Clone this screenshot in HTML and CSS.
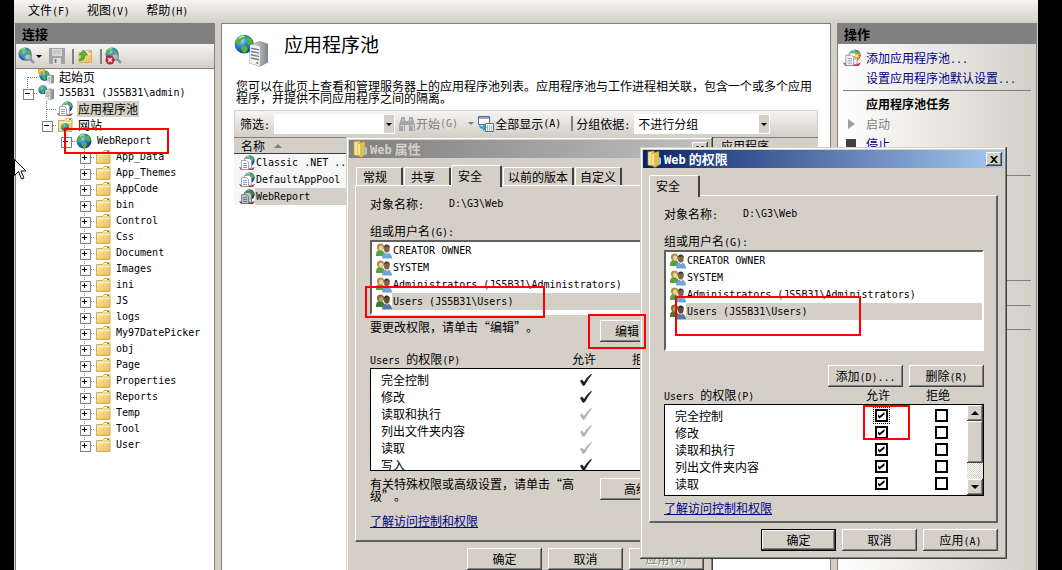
FILE: index.html
```
<!DOCTYPE html>
<html lang="zh-CN">
<head>
    <meta charset="UTF-8">
    <meta name="viewport" content="width=device-width, initial-scale=1.0">
    <title>应用程序池</title>
    <link rel="stylesheet" href="styles.css">
</head>
<body>
    <!-- icon set -->
    <svg class="sprite" aria-hidden="true">
        <defs>
            <radialGradient id="gGlobe" cx="0.35" cy="0.3" r="0.8">
                <stop offset="0" stop-color="#a8e0ff"/>
                <stop offset="0.4" stop-color="#2f86dc"/>
                <stop offset="1" stop-color="#0b2f80"/>
            </radialGradient>
            <linearGradient id="gFolder" x1="0" y1="0" x2="1" y2="1">
                <stop offset="0" stop-color="#fdeeb0"/>
                <stop offset="1" stop-color="#e5b95c"/>
            </linearGradient>
            <linearGradient id="gTower" x1="0" y1="0" x2="1" y2="0">
                <stop offset="0" stop-color="#e8ebec"/>
                <stop offset="1" stop-color="#7d8488"/>
            </linearGradient>
        </defs>
        <symbol id="globe" viewBox="0 0 16 16">
            <circle cx="8" cy="8" r="7.5" fill="url(#gGlobe)"/>
            <path d="M3 3q3-3 6-1.500l-1 2-2 1-1 3-2.500 1-1.500-2zM10 3l3 0 2 4-2 2-2-1-1.500-2.500zM6 9l4 1 1 2-2 3-2-.5-1.500-3z" fill="#55b52d"/>
            <path d="M4 3.500q2-2 4-1.500" stroke="#d4f5c0" fill="none"/>
        </symbol>
        <symbol id="tower" viewBox="0 0 13 16">
            <path d="M2 3l6-2 5 1.500v11l-5 2.500-6-2z" fill="url(#gTower)" stroke="#80878a" stroke-width="0.500"/>
            <path d="M2 3l6 1v12l-6-2z" fill="#f1f3f3"/>
            <path d="M2.500 5l5 1M2.500 7l5 1M2.500 9l5 1M2.500 11l5 1" stroke="#7a8286" stroke-width="0.900"/>
            <circle cx="6.500" cy="14" r="0.700" fill="#3bb54a"/>
        </symbol>
        <symbol id="server" viewBox="0 0 16 16">
            <use href="#globe" x="0" y="0" width="9.500" height="9.500"/>
            <use href="#tower" x="6" y="2" width="10" height="14"/>
        </symbol>
        <symbol id="home" viewBox="0 0 16 16">
            <use href="#globe" x="1" y="1" width="11" height="11"/>
            <use href="#tower" x="8" y="4" width="8" height="12"/>
            <path d="M0 0h7v4l-3-1-1 3-3-2z" fill="#f7a823"/>
            <path d="M1 2l4-1" stroke="#fff3b0"/>
        </symbol>
        <symbol id="pool" viewBox="0 0 16 16">
            <use href="#globe" x="5" y="0" width="11" height="11"/>
            <path d="M0 12l2 3h12l2-3-3 1h-9z" fill="#c83a2c"/>
            <path d="M5.500 3.500h5l2 2v8h-7z" fill="#fff" stroke="#8794a6" stroke-width="0.800"/>
            <path d="M2.500 5.500h5l2 2v7h-7z" fill="#fff" stroke="#8794a6" stroke-width="0.800"/>
            <path d="M4 8.500h4M4 10.500h4M4 12.500h4" stroke="#7d92b8" stroke-width="0.900"/>
        </symbol>
        <symbol id="addpool" viewBox="0 0 16 16">
            <use href="#pool" width="16" height="16"/>
            <path d="M12 2l1 2.500 2.500-1-1 2.500 1.500 1-2 .5.500 2.500-2.500-1.500-2 1.500.5-2.500-2-1 2.500-.5-.5-2.500 1.500 1z" fill="#f79a1c"/>
            <circle cx="12" cy="6.200" r="1.300" fill="#fff2a0"/>
        </symbol>
        <symbol id="folder" viewBox="0 0 16 16">
            <path d="M1.500 3.500h6l1.500-2h6v13h-13.500z" fill="url(#gFolder)" stroke="#d6ab5a"/>
            <path d="M9.500 2.500h5" stroke="#fff" stroke-width="1.200"/>
            <path d="M12 2.500h2" stroke="#3b7fc4" stroke-width="1"/>
            <path d="M2 5.500h12.500" stroke="#fff4c8"/>
        </symbol>
        <symbol id="sites" viewBox="0 0 16 16">
            <use href="#folder" width="16" height="16"/>
            <use href="#globe" x="4" y="6" width="8" height="8"/>
        </symbol>
        <symbol id="bookfolder" viewBox="0 0 16 18">
            <path d="M2 2l6-1v15l-6-1z" fill="#f8e58a" stroke="#c9a53b" stroke-width="0.600"/>
            <path d="M6 3l7-1.500v13.500l-4 2.500-3-2z" fill="#e3bf4c" stroke="#b08f2f" stroke-width="0.600"/>
            <path d="M7 4v11" stroke="#fff6b8" stroke-width="1.500"/>
            <path d="M13 7l2 1v6l-2 1z" fill="#a8cbe0"/>
        </symbol>
        <symbol id="users" viewBox="0 0 16 16">
            <path d="M0 12q0-5 4-5t5 5v1h-9z" fill="#57a33b"/>
            <circle cx="4.500" cy="4" r="3.600" fill="#b09340"/>
            <ellipse cx="5" cy="5" rx="2" ry="2.500" fill="#f2d2ab"/>
            <path d="M6 15.500q0-6 4.500-6t5.500 5v1z" fill="#6ea3dc"/>
            <path d="M9.500 9.500l1.500 2 1.500-2z" fill="#fff"/>
            <ellipse cx="10.800" cy="6" rx="2.800" ry="3.600" fill="#8b6140"/>
            <path d="M8 5q0-4 3-3.500t3 4l-1.500-2-3 0z" fill="#2d3540"/>
        </symbol>
        <symbol id="magnifier" viewBox="0 0 18 18">
            <use href="#globe" x="0" y="0" width="14" height="14"/>
            <path d="M12 12l4 4" stroke="#8a9aa8" stroke-width="2.500"/>
            <circle cx="10" cy="10" r="3.200" fill="#dcebf5" fill-opacity="0.700" stroke="#75899c" stroke-width="1.200"/>
        </symbol>
        <symbol id="disconnect" viewBox="0 0 18 18">
            <use href="#magnifier" width="18" height="18"/>
            <circle cx="5" cy="13" r="4.500" fill="#c71f1f"/>
            <path d="M3 11l4 4M7 11l-4 4" stroke="#fff" stroke-width="1.300"/>
        </symbol>
        <symbol id="save" viewBox="0 0 16 16">
            <path d="M0 0h16v16h-15l-1-1z" fill="#a2a2a2"/>
            <path d="M3 1h10v7h-10z" fill="#d9d9d9"/>
            <path d="M4 3h8M4 5h8" stroke="#b5b5b5"/>
            <path d="M4 10h8v6h-8z" fill="#dedede"/>
            <path d="M5.500 11h2v4h-2z" fill="#808080"/>
        </symbol>
        <symbol id="upfolder" viewBox="0 0 16 16">
            <use href="#folder" x="0" y="1" width="16" height="15"/>
            <path d="M4 13q4-1 4-6h2.500l-4-5-4.500 5h2.500q0 3-2.500 5z" fill="#56b53b" stroke="#2f8a1e" stroke-width="0.600"/>
        </symbol>
        <symbol id="binoculars" viewBox="0 0 16 16">
            <path d="M2.500 1h3.500v3l1 1h2l1-1v-3h3.500l2.500 8v6h-6v-6h-4v6h-6v-6z" fill="#a5a5a5"/>
            <path d="M1.500 9.500h3v5M11.500 9.500h3v5M4 2.500v3M12 2.500v3" fill="none" stroke="#d8d8d8"/>
        </symbol>
        <symbol id="showall" viewBox="0 0 16 16">
            <path d="M.5.500h11v8h-11z" fill="#fff" stroke="#5d6f88"/>
            <path d="M1 1h10v2h-10z" fill="#8fa8c8"/>
            <path d="M7.500 7.500h8v8h-8z" fill="#fff" stroke="#5d6f88"/>
            <path d="M9 10h5M9 12h5M9 14h5" stroke="#4f79b0" stroke-dasharray="1 1"/>
            <path d="M1 9q0 4 4 4v2.500l4-4-4-3.500v2.500q-2 0-4-1.500z" fill="#2aa0e0"/>
        </symbol>
        <symbol id="tick" viewBox="0 0 12 12">
            <path d="M0 7l2-1.500 2 2.500q3-5 7-8l1 .5q-4 4.500-7 10.500l-2 1z" fill="currentColor"/>
        </symbol>
        <symbol id="cross" viewBox="0 0 8 7">
            <path d="M0 0h2l2 2 2-2h2l-3 3.500 3 3.500h-2l-2-2-2 2h-2l3-3.500z" fill="#000"/>
        </symbol>
    </svg>

    <div class="app">
        <nav class="menubar">
            <button>文件<span class="en">(F)</span></button>
            <button>视图<span class="en">(V)</span></button>
            <button>帮助<span class="en">(H)</span></button>
        </nav>

        <div class="columns">
            <aside class="connections">
                <h2>连接</h2>
                <div class="toolbar">
                    <button class="drop" aria-label="连接"><svg class="i18"><use href="#magnifier"/></svg></button>
                    <button aria-label="保存"><svg class="i16"><use href="#save"/></svg></button>
                    <span class="sep"></span>
                    <button aria-label="向上"><svg class="i16"><use href="#upfolder"/></svg></button>
                    <span class="sep"></span>
                    <button aria-label="断开"><svg class="i18"><use href="#disconnect"/></svg></button>
                </div>
                <ul class="tree">
                    <li class="first"><div class="node"><i class="blank"></i><svg class="i16"><use href="#home"/></svg><span class="name">起始页</span></div></li>
                    <li><div class="node"><i class="box minus"></i><svg class="i16"><use href="#server"/></svg><span class="name en">JS5B31 (JS5B31\admin)</span></div>
                        <ul>
                            <li><div class="node"><i class="blank"></i><svg class="i16"><use href="#pool"/></svg><span class="name selected">应用程序池</span></div></li>
                            <li><div class="node"><i class="box minus"></i><svg class="i16"><use href="#sites"/></svg><span class="name">网站</span></div>
                                <ul>
                                    <li><div class="node"><i class="box minus"></i><svg class="i16"><use href="#globe"/></svg><span class="name en">WebReport</span></div>
                                        <ul>
                                            <li><div class="node"><i class="box"></i><svg class="i16"><use href="#folder"/></svg><span class="name en">App_Data</span></div></li>
                                            <li><div class="node"><i class="box"></i><svg class="i16"><use href="#folder"/></svg><span class="name en">App_Themes</span></div></li>
                                            <li><div class="node"><i class="box"></i><svg class="i16"><use href="#folder"/></svg><span class="name en">AppCode</span></div></li>
                                            <li><div class="node"><i class="box"></i><svg class="i16"><use href="#folder"/></svg><span class="name en">bin</span></div></li>
                                            <li><div class="node"><i class="box"></i><svg class="i16"><use href="#folder"/></svg><span class="name en">Control</span></div></li>
                                            <li><div class="node"><i class="box"></i><svg class="i16"><use href="#folder"/></svg><span class="name en">Css</span></div></li>
                                            <li><div class="node"><i class="box"></i><svg class="i16"><use href="#folder"/></svg><span class="name en">Document</span></div></li>
                                            <li><div class="node"><i class="box"></i><svg class="i16"><use href="#folder"/></svg><span class="name en">Images</span></div></li>
                                            <li><div class="node"><i class="box"></i><svg class="i16"><use href="#folder"/></svg><span class="name en">ini</span></div></li>
                                            <li><div class="node"><i class="box"></i><svg class="i16"><use href="#folder"/></svg><span class="name en">JS</span></div></li>
                                            <li><div class="node"><i class="box"></i><svg class="i16"><use href="#folder"/></svg><span class="name en">logs</span></div></li>
                                            <li><div class="node"><i class="box"></i><svg class="i16"><use href="#folder"/></svg><span class="name en">My97DatePicker</span></div></li>
                                            <li><div class="node"><i class="box"></i><svg class="i16"><use href="#folder"/></svg><span class="name en">obj</span></div></li>
                                            <li><div class="node"><i class="box"></i><svg class="i16"><use href="#folder"/></svg><span class="name en">Page</span></div></li>
                                            <li><div class="node"><i class="box"></i><svg class="i16"><use href="#folder"/></svg><span class="name en">Properties</span></div></li>
                                            <li><div class="node"><i class="box"></i><svg class="i16"><use href="#folder"/></svg><span class="name en">Reports</span></div></li>
                                            <li><div class="node"><i class="box"></i><svg class="i16"><use href="#folder"/></svg><span class="name en">Temp</span></div></li>
                                            <li><div class="node"><i class="box"></i><svg class="i16"><use href="#folder"/></svg><span class="name en">Tool</span></div></li>
                                            <li><div class="node"><i class="box"></i><svg class="i16"><use href="#folder"/></svg><span class="name en">User</span></div></li>
                                        </ul>
                                    </li>
                                </ul>
                            </li>
                        </ul>
                    </li>
                </ul>
            </aside>

            <main class="content">
                <header>
                    <svg class="i34"><use href="#server"/></svg>
                    <h1>应用程序池</h1>
                </header>
                <p class="intro">您可以在此页上查看和管理服务器上的应用程序池列表。应用程序池与工作进程相关联，包含一个或多个应用程序，并提供不同应用程序之间的隔离。</p>
                <div class="filterbar">
                    <label for="filter">筛选<span class="en">:</span></label>
                    <span class="combo filter"><input type="text" id="filter"></span>
                    <button class="start drop" disabled><svg class="i16"><use href="#binoculars"/></svg>开始<span class="en">(G)</span></button>
                    <button class="all"><svg class="i16"><use href="#showall"/></svg>全部显示<span class="en">(A)</span></button>
                    <span class="sep"></span>
                    <label for="group">分组依据<span class="en">:</span></label>
                    <span class="combo group"><select id="group"><option>不进行分组</option></select></span>
                </div>
                <table class="pools">
                    <thead>
                        <tr><th class="col-name">名称<i class="sort"></i></th><th class="col-mid"></th><th>应用程序</th></tr>
                    </thead>
                    <tbody>
                        <tr><td><div><svg class="i16"><use href="#pool"/></svg><span class="en">Classic .NET ..</span></div></td><td></td><td></td></tr>
                        <tr><td><div><svg class="i16"><use href="#pool"/></svg><span class="en">DefaultAppPool</span></div></td><td></td><td></td></tr>
                        <tr class="current"><td><div><svg class="i16"><use href="#pool"/></svg><span class="en">WebReport</span></div></td><td></td><td></td></tr>
                    </tbody>
                </table>
            </main>

            <aside class="actions">
                <h2>操作</h2>
                <ul>
                    <li><svg class="i18"><use href="#addpool"/></svg><a href="#">添加应用程序池<span class="en">...</span></a></li>
                    <li><i class="noicon"></i><a href="#">设置应用程序池默认设置<span class="en">...</span></a></li>
                </ul>
                <ul class="tasks">
                    <li><i class="noicon"></i><b>应用程序池任务</b></li>
                    <li><i class="play"></i><span class="off">启动</span></li>
                    <li><i class="stop"></i><a href="#">停止</a></li>
                </ul>
                <div class="group tall"></div>
                <div class="group"></div>
                <div class="group"></div>
            </aside>
        </div>
    </div>

    <!-- Web 属性 -->
    <section class="dialog props" aria-label="Web 属性">
        <div class="titlebar inactive"><svg class="i18"><use href="#bookfolder"/></svg><h3><span class="en">Web</span> 属性</h3><button class="close" aria-label="关闭"><svg><use href="#cross"/></svg></button></div>
        <div class="tabs">
            <button>常规</button><button>共享</button><button class="active">安全</button><button class="wide">以前的版本</button><button>自定义</button>
        </div>
        <div class="panel">
            <div class="object"><span>对象名称<span class="en">:</span></span><span class="en">D:\G3\Web</span></div>
            <div class="caption">组或用户名<span class="en">(G):</span></div>
            <ul class="principals">
                <li><svg class="i16"><use href="#users"/></svg><span class="en">CREATOR OWNER</span></li>
                <li><svg class="i16"><use href="#users"/></svg><span class="en">SYSTEM</span></li>
                <li><svg class="i16"><use href="#users"/></svg><span class="en">Administrators (JS5B31\Administrators)</span></li>
                <li class="current"><svg class="i16"><use href="#users"/></svg><span class="en">Users (JS5B31\Users)</span></li>
            </ul>
            <div class="hint"><p>要更改权限，请单击“编辑”。</p><button class="btn">编辑<span class="en">(E)...</span></button></div>
            <div class="permhead"><span><span class="en">Users </span>的权限<span class="en">(P)</span></span><span>允许</span><span>拒绝</span></div>
            <div class="perms">
                <table>
                    <tr><th>完全控制</th><td><svg class="tick"><use href="#tick"/></svg></td><td></td></tr>
                    <tr><th>修改</th><td><svg class="tick"><use href="#tick"/></svg></td><td></td></tr>
                    <tr><th>读取和执行</th><td><svg class="tick dim"><use href="#tick"/></svg></td><td></td></tr>
                    <tr><th>列出文件夹内容</th><td><svg class="tick dim"><use href="#tick"/></svg></td><td></td></tr>
                    <tr><th>读取</th><td><svg class="tick dim"><use href="#tick"/></svg></td><td></td></tr>
                    <tr><th>写入</th><td><svg class="tick"><use href="#tick"/></svg></td><td></td></tr>
                </table>
            </div>
            <div class="hint advanced"><p>有关特殊权限或高级设置，请单击“高级”。</p><button class="btn">高级<span class="en">(V)</span></button></div>
            <a class="learn" href="#">了解访问控制和权限</a>
        </div>
        <div class="footer"><button class="btn">确定</button><button class="btn">取消</button><button class="btn" disabled>应用<span class="en">(A)</span></button></div>
    </section>

    <!-- Web 的权限 -->
    <section class="dialog rights" aria-label="Web 的权限">
        <div class="titlebar"><svg class="i18"><use href="#bookfolder"/></svg><h3><span class="en">Web</span> 的权限</h3><button class="close" aria-label="关闭"><svg><use href="#cross"/></svg></button></div>
        <div class="tabs"><button class="active">安全</button></div>
        <div class="panel">
            <div class="object"><span>对象名称<span class="en">:</span></span><span class="en">D:\G3\Web</span></div>
            <div class="caption">组或用户名<span class="en">(G):</span></div>
            <ul class="principals">
                <li><svg class="i16"><use href="#users"/></svg><span class="en">CREATOR OWNER</span></li>
                <li><svg class="i16"><use href="#users"/></svg><span class="en">SYSTEM</span></li>
                <li><svg class="i16"><use href="#users"/></svg><span class="en">Administrators (JS5B31\Administrators)</span></li>
                <li class="current"><svg class="i16"><use href="#users"/></svg><span class="en">Users (JS5B31\Users)</span></li>
            </ul>
            <div class="editrow"><button class="btn">添加<span class="en">(D)...</span></button><button class="btn">删除<span class="en">(R)</span></button></div>
            <div class="permhead"><span><span class="en">Users </span>的权限<span class="en">(P)</span></span><span>允许</span><span>拒绝</span></div>
            <div class="perms">
                <table>
                    <tr><th>完全控制</th><td><input class="focus" type="checkbox" checked aria-label="允许完全控制"></td><td><input type="checkbox" aria-label="拒绝完全控制"></td></tr>
                    <tr><th>修改</th><td><input type="checkbox" checked aria-label="允许修改"></td><td><input type="checkbox" aria-label="拒绝修改"></td></tr>
                    <tr><th>读取和执行</th><td><input type="checkbox" checked aria-label="允许读取和执行"></td><td><input type="checkbox" aria-label="拒绝读取和执行"></td></tr>
                    <tr><th>列出文件夹内容</th><td><input type="checkbox" checked aria-label="允许列出文件夹内容"></td><td><input type="checkbox" aria-label="拒绝列出文件夹内容"></td></tr>
                    <tr><th>读取</th><td><input type="checkbox" checked aria-label="允许读取"></td><td><input type="checkbox" aria-label="拒绝读取"></td></tr>
                </table>
                <div class="scrollbar">
                    <button class="up" aria-label="向上滚动"></button>
                    <div class="thumb"></div>
                    <button class="down" aria-label="向下滚动"></button>
                </div>
            </div>
            <a class="learn" href="#">了解访问控制和权限</a>
        </div>
        <div class="footer"><button class="btn default">确定</button><button class="btn">取消</button><button class="btn">应用<span class="en">(A)</span></button></div>
    </section>

    <!-- red marks -->
    <div class="mark mark-site"></div>
    <div class="mark mark-users"></div>
    <div class="mark mark-edit"></div>
    <div class="mark mark-users2"></div>
    <div class="mark mark-allow"></div>
    <svg class="cursor" viewBox="0 0 12 21"><path d="M.5.500v16l4-4 3 7.500 2.500-1-3-7h5z" fill="#fff" stroke="#000"/></svg>
</body>
</html>
```

FILE: styles.css
```
* {
    box-sizing: border-box;
}

body {
    margin: 0;
    height: 100vh;
    padding: 0 24px 0 14px;
    background: #000;
    color: #000;
    font-family: "Noto Sans CJK SC", sans-serif;
    font-size: 12px;
    line-height: 16px;
    overflow: hidden;
    position: relative;
    text-spacing-trim: space-all;
}

/* half-width latin next to the 12px chinese */
.en {
    font-family: "DejaVu Sans Mono", monospace;
    font-size: 10px;
    line-height: 12px;
    white-space: pre;
}

h1, h2, h3, p, ul {
    margin: 0;
    padding: 0;
}

ul {
    list-style: none;
}

button, input, select {
    font: inherit;
    color: inherit;
    margin: 0;
    padding: 0;
    border: 0;
    border-radius: 0;
    background: none;
    white-space: nowrap;
}

svg {
    display: block;
    flex: none;
}

.sprite {
    position: absolute;
    width: 0;
    height: 0;
}

.i16 { width: 16px; height: 16px; }
.i18 { width: 18px; height: 18px; }
.i34 { width: 34px; height: 34px; }

.app {
    height: 100%;
    display: flex;
    flex-direction: column;
    background: #d4d0c8;
}

.menubar {
    height: 23px;
    padding: 2px 14px;
    display: flex;
    align-items: flex-start;
    gap: 17px;
    background: linear-gradient(#f6f5f3, #d4d0c8);
}

.columns {
    flex: 1;
    min-height: 0;
    display: flex;
    gap: 6px;
    padding: 0 1px;
}

.columns > * {
    border: 1px solid #808080;
    border-bottom: 0;
}

.connections, .actions {
    width: 200px;
    flex: none;
}

h2 {
    height: 20px;
    padding-left: 6px;
    font-size: 13px;
    line-height: 20px;
    background: #808080;
}

.sep {
    width: 2px;
    height: 15px;
    background: #808080;
}

/* left side */
.connections {
    background: #fff;
}

.toolbar {
    height: 25px;
    padding: 0 2px;
    display: flex;
    align-items: center;
    gap: 7px;
    background: linear-gradient(#f6f5f3, #d4d0c8);
    border-bottom: 1px solid #808080;
}

.toolbar .sep + button {
    margin-left: -4px;
}

.drop {
    display: flex;
    align-items: center;
}

.drop::after {
    content: '';
    border: 3px solid transparent;
    border-top-color: currentColor;
    border-bottom: 0;
}

.tree {
    padding-left: 7px;
}

.tree ul {
    padding-left: 19px;
}

.tree li {
    background: repeating-linear-gradient(#808080 0 1px, transparent 1px 2px) 4px 0 / 1px 100% no-repeat;
}

.tree li:last-child {
    background-size: 1px 8px;
}

.tree > .first {
    background-position: 4px 8px;
}

.node {
    display: flex;
    align-items: center;
    height: 16px;
}

.node .box, .node .blank {
    width: 15px;
    height: 9px;
    display: block;
    flex: none;
    background: repeating-linear-gradient(90deg, #808080 0 1px, transparent 1px 2px) 5px 4px / 10px 1px no-repeat;
}

.node .box::before {
    content: '';
    display: block;
    width: 9px;
    height: 9px;
    border: 1px solid #808080;
    background:
        linear-gradient(#000, #000) 1px 3px / 5px 1px no-repeat,
        linear-gradient(#000, #000) 3px 1px / 1px 5px no-repeat,
        #fff;
}

.node .minus::before {
    background: linear-gradient(#000, #000) 1px 3px / 5px 1px no-repeat, #fff;
}

.name {
    margin-left: 4px;
    padding: 0 1px;
}

.name.selected {
    background: #d4d0c8;
}

/* middle */
.content {
    flex: 1;
    min-width: 0;
    padding: 10px 12px 0;
    display: flex;
    flex-direction: column;
    background: #fff;
}

.content header {
    display: flex;
    gap: 16px;
}

h1 {
    font-size: 19px;
    font-weight: normal;
    line-height: 20px;
}

.intro {
    margin: 12px 5px 6px 2px;
    line-height: 12px;
}

.filterbar {
    height: 27px;
    padding: 0 5px;
    display: flex;
    align-items: center;
    background: linear-gradient(#f6f5f3, #d4d0c8);
    border: 1px solid #d4d0c8;
}

.combo {
    position: relative;
    height: 20px;
    margin-left: 4px;
    background: #fff;
}

.combo input, .combo select {
    width: 100%;
    height: 20px;
    padding: 0 4px;
    appearance: none;
    outline: 0;
}

.combo::before {
    content: '';
    position: absolute;
    top: 1px;
    right: 1px;
    bottom: 1px;
    width: 10px;
    background: #d4d0c8;
}

.combo::after {
    content: '';
    position: absolute;
    top: 9px;
    right: 3px;
    border: 3px solid transparent;
    border-top-color: #000;
    border-bottom: 0;
}

.filter { width: 121px; }
.group { width: 136px; }

.start {
    margin-left: 4px;
    color: #808080;
}

.start::after {
    margin-left: 10px;
}

.all {
    margin: 0 10px 0 4px;
    display: flex;
    align-items: center;
}

.start svg, .all svg {
    margin-right: 1px;
}

.filterbar .sep {
    margin-right: 3px;
}

.pools {
    width: 100%;
    table-layout: fixed;
    border-collapse: collapse;
}

.pools th {
    height: 16px;
    padding: 0 7px;
    text-align: left;
    font-weight: normal;
    line-height: 14px;
    background: #d4d0c8;
    border-top: 1px solid #808080;
    border-bottom: 1px solid #404040;
}

.col-name { width: 112px; }
.col-mid { width: 368px; }

.sort {
    display: inline-block;
    margin-left: 9px;
    vertical-align: 3px;
    border: 4px solid transparent;
    border-bottom-color: #808080;
    border-top: 0;
}

.pools td {
    height: 17px;
    padding: 0 0 0 5px;
}

.pools td:first-child {
    background: #f6f6f6;
}

.pools td div {
    display: flex;
    align-items: center;
}

.pools td span {
    padding-left: 1px;
    line-height: 17px;
}

.pools .current span {
    flex: 1;
    background: #d4d0c8;
}

.pools .current svg, .principals .current svg {
    filter: brightness(0.75);
}

/* right side */
.actions {
    background: linear-gradient(90deg, #fff, #d4d0c8);
}

.actions ul {
    margin: 0 5px;
    padding: 4px 0 2px;
}

.actions li {
    display: flex;
    align-items: center;
    height: 20px;
    gap: 5px;
    white-space: nowrap;
}

.actions a {
    color: #000080;
    text-decoration: none;
}

.actions .tasks {
    padding-top: 3px;
    border-top: 1px solid #808080;
}

.actions .group, .actions .tall {
    width: auto;
    height: 25px;
    margin: 0 5px;
    border-top: 1px solid #808080;
}

.actions .tall {
    height: 105px;
    margin-top: 19px;
}

.actions .group:last-child {
    border-bottom: 1px solid #808080;
}

.noicon, .play, .stop {
    width: 18px;
    flex: none;
}

.play::before {
    content: '';
    display: block;
    width: 0;
    margin-left: 5px;
    border: 5px solid transparent;
    border-left: 7px solid #a0a0a0;
    border-right: 0;
}

.stop::before {
    content: '';
    display: block;
    width: 10px;
    height: 10px;
    margin-left: 3px;
    background: #404040;
}

.off {
    color: #808080;
}

/* dialogs */
.dialog {
    position: absolute;
    width: 367px;
    padding: 3px 3px 8px;
    background: #d4d0c8;
    box-shadow: inset -1px -1px #404040, inset 1px 1px #d4d0c8, inset -2px -2px #808080, inset 2px 2px #fff;
}

.props { left: 346px; top: 137px; }
.rights { left: 640px; top: 147px; }

.titlebar {
    height: 18px;
    padding: 0 2px;
    display: flex;
    align-items: center;
    color: #fff;
    background: linear-gradient(90deg, #0a246a, #a6caf0);
}

.inactive {
    color: #d4d0c8;
    background: linear-gradient(90deg, #808080, #c0c0c0);
}

h3 {
    flex: 1;
    padding-left: 1px;
    font-size: 13px;
    line-height: 18px;
}

h3 .en {
    font-size: 12px;
}

.close {
    width: 16px;
    height: 14px;
    display: grid;
    place-items: center;
    background: #d4d0c8;
    box-shadow: inset -1px -1px #404040, inset 1px 1px #fff, inset -2px -2px #808080;
}

.close svg {
    width: 8px;
    height: 7px;
}

.tabs {
    height: 20px;
    margin: 7px 6px 0;
    display: flex;
    align-items: flex-end;
}

.tabs button {
    height: 18px;
    padding: 0 11px 0 6px;
    margin-left: 1px;
    text-align: left;
    min-width: 47px;
    border: 1px solid #fff;
    border-right: 2px solid #404040;
    border-bottom: 0;
    border-radius: 2px 2px 0 0;
}

.tabs .wide, .tabs .wide + button {
    padding: 0 4px;
}

.tabs .active {
    height: 22px;
    width: 51px;
    margin: 0 0 -2px;
    padding-bottom: 2px;
    background: #d4d0c8;
    z-index: 1;
}

.panel {
    margin: 0 6px;
    padding: 10px 12px 5px 14px;
    border: 2px solid;
    border-color: #fff #606060 #606060 #fff;
    border-left-width: 1px;
    border-top-width: 1px;
}

.props .panel {
    padding-bottom: 11px;
}

.object {
    display: flex;
    align-items: center;
    height: 16px;
}

.object > :first-child {
    width: 79px;
}

.caption {
    height: 16px;
    margin-top: 11px;
}

.principals {
    height: 101px;
    margin-top: 1px;
    padding-left: 4px;
    background: #fff;
    border: 2px solid;
    border-color: #606060 #fff #fff #606060;
}

.props .principals {
    height: 75px;
}

.principals li {
    display: flex;
    align-items: center;
    height: 17px;
}

.principals span {
    flex: 1;
    padding-left: 1px;
    line-height: 17px;
}

.principals .current span {
    background: #d4d0c8;
}

.btn {
    width: 75px;
    height: 22px;
    line-height: 18px;
    background: #d4d0c8;
    box-shadow: inset -1px -1px #404040, inset 1px 1px #fff, inset -2px -2px #808080;
}

.btn:disabled {
    color: #808080;
    text-shadow: 1px 1px #fff;
}

.default {
    box-shadow: inset 0 0 0 1px #000, inset -2px -2px #404040, inset 2px 2px #fff, inset -3px -3px #808080;
}

.hint {
    display: flex;
    justify-content: space-between;
    margin: 5px 0 9px;
}

.hint .btn {
    width: 90px;
}

.hint p {
    width: 206px;
    line-height: 14px;
}

.advanced {
    height: 22px;
    margin: 7px 0 13px;
}

.advanced p {
    width: 210px;
    line-height: 12px;
}

.editrow, .footer {
    display: flex;
    justify-content: flex-end;
    gap: 6px;
}

.editrow {
    margin-top: 14px;
}

.permhead {
    display: grid;
    grid-template-columns: 1fr 64px 56px;
    height: 16px;
    padding-right: 18px;
    text-align: center;
}

.permhead > :first-child {
    text-align: left;
}

.perms {
    height: 92px;
    margin: 1px 0 4px;
    display: flex;
    background: #fff;
    border: 1px solid #000;
    overflow: hidden;
}

.props .perms {
    height: 103px;
    padding-right: 17px;
}

.perms table {
    flex: 1;
    margin-top: 2px;
    align-self: flex-start;
    table-layout: fixed;
    border-collapse: collapse;
}

.perms th {
    height: 17px;
    padding: 0 0 0 10px;
    text-align: left;
    font-weight: normal;
}

.perms td {
    width: 52px;
    padding: 0;
}

.perms td:nth-child(2) {
    width: 68px;
}

.perms td > * {
    display: block;
    margin: 0 auto;
}

.tick {
    width: 12px;
    height: 12px;
    color: #202020;
}

.dim {
    color: #b4b4b4;
}

.perms input {
    appearance: none;
    width: 13px;
    height: 13px;
    border: 2px solid #000;
    background: #fff;
}

.perms input:checked::before {
    content: '';
    display: block;
    width: 7px;
    height: 7px;
    margin: 1px;
    background: #000;
    clip-path: polygon(0 30%, 30% 58%, 100% 0, 100% 34%, 30% 94%, 0 64%);
}

.perms .focus {
    outline: 1px dotted #000;
    outline-offset: 1px;
}

.scrollbar {
    width: 16px;
    display: flex;
    flex-direction: column;
    background: repeating-conic-gradient(#fff 0 25%, #d4d0c8 0 50%) 0 0 / 2px 2px;
}

.scrollbar > * {
    background: #d4d0c8;
    box-shadow: inset -1px -1px #404040, inset 1px 1px #fff, inset -2px -2px #808080;
}

.scrollbar button {
    height: 16px;
    display: grid;
    place-items: center;
}

.thumb {
    height: 42px;
    margin-bottom: auto;
}

.scrollbar button::before {
    content: '';
    border: 4px solid transparent;
}

.scrollbar .up::before {
    border-top: 0;
    border-bottom-color: #000;
}

.scrollbar .down::before {
    border-bottom: 0;
    border-top-color: #000;
}

.learn {
    display: block;
    width: fit-content;
    color: #000080;
}

.footer {
    margin: 6px 6px 0;
}

/* red marks and the pointer lie over everything */
.mark {
    position: absolute;
    border: 2px solid #f00;
}

.mark-site { left: 64px; top: 128px; width: 105px; height: 26px; }
.mark-users { left: 365px; top: 286px; width: 180px; height: 32px; }
.mark-edit { left: 588px; top: 314px; width: 58px; height: 35px; }
.mark-users2 { left: 675px; top: 296px; width: 186px; height: 40px; }
.mark-allow { left: 863px; top: 405px; width: 47px; height: 35px; }

.cursor {
    position: absolute;
    left: 14px;
    top: 159px;
    width: 12px;
    height: 21px;
}
```
